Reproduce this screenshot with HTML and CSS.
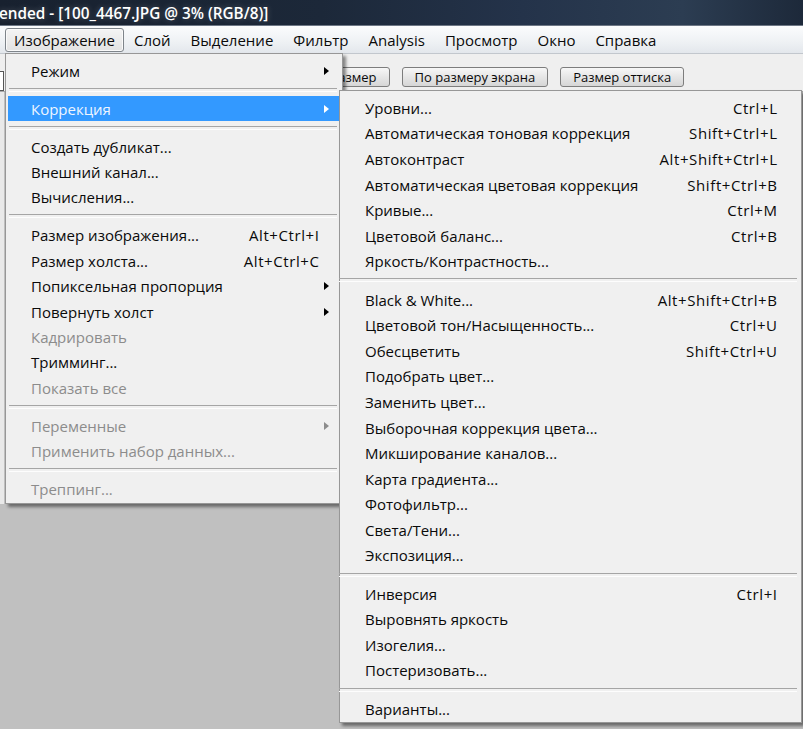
FILE: index.html
```html
<!DOCTYPE html>
<html lang="ru">
<head>
<meta charset="utf-8">
<title>Photoshop — Изображение</title>
<link rel="stylesheet" href="styles.css">
</head>
<body>
<div class="app">
  <div class="titlebar"><span class="title">ended - [100_4467.JPG @ 3% (RGB/8)]</span></div>
  <div class="menubar">
    <span class="mb-item active">Изображение</span>
    <span class="mb-item">Слой</span>
    <span class="mb-item">Выделение</span>
    <span class="mb-item">Фильтр</span>
    <span class="mb-item">Analysis</span>
    <span class="mb-item">Просмотр</span>
    <span class="mb-item">Окно</span>
    <span class="mb-item">Справка</span>
  </div>
  <div class="optionsbar">
    <span class="opt-field"></span>
    <span class="btn btn-first">Реальный размер</span>
    <span class="btn">По размеру экрана</span>
    <span class="btn">Размер оттиска</span>
  </div>
  <div class="workspace">
    <div class="tools"></div>
    <div class="canvas"></div>
  </div>

  <div class="menu menu-main">
    <div class="mi"><span class="lbl">Режим</span><span class="arr"><i class="tri"></i></span></div>
    <div class="sep"></div>
    <div class="mi hl"><span class="lbl">Коррекция</span><span class="arr"><i class="tri"></i></span></div>
    <div class="sep"></div>
    <div class="mi"><span class="lbl">Создать дубликат...</span><span class="arr"></span></div>
    <div class="mi"><span class="lbl">Внешний канал...</span><span class="arr"></span></div>
    <div class="mi"><span class="lbl">Вычисления...</span><span class="arr"></span></div>
    <div class="sep"></div>
    <div class="mi"><span class="lbl">Размер изображения...</span><span class="sc">Alt+Ctrl+I</span><span class="arr"></span></div>
    <div class="mi"><span class="lbl">Размер холста...</span><span class="sc">Alt+Ctrl+C</span><span class="arr"></span></div>
    <div class="mi"><span class="lbl">Попиксельная пропорция</span><span class="arr"><i class="tri"></i></span></div>
    <div class="mi"><span class="lbl">Повернуть холст</span><span class="arr"><i class="tri"></i></span></div>
    <div class="mi dis"><span class="lbl">Кадрировать</span><span class="arr"></span></div>
    <div class="mi"><span class="lbl">Тримминг...</span><span class="arr"></span></div>
    <div class="mi dis"><span class="lbl">Показать все</span><span class="arr"></span></div>
    <div class="sep"></div>
    <div class="mi dis"><span class="lbl">Переменные</span><span class="arr"><i class="tri"></i></span></div>
    <div class="mi dis"><span class="lbl">Применить набор данных...</span><span class="arr"></span></div>
    <div class="sep"></div>
    <div class="mi dis"><span class="lbl">Треппинг...</span><span class="arr"></span></div>
  </div>

  <div class="menu menu-sub">
    <div class="mi"><span class="lbl">Уровни...</span><span class="sc">Ctrl+L</span><span class="arr"></span></div>
    <div class="mi"><span class="lbl">Автоматическая тоновая коррекция</span><span class="sc">Shift+Ctrl+L</span><span class="arr"></span></div>
    <div class="mi"><span class="lbl">Автоконтраст</span><span class="sc">Alt+Shift+Ctrl+L</span><span class="arr"></span></div>
    <div class="mi"><span class="lbl">Автоматическая цветовая коррекция</span><span class="sc">Shift+Ctrl+B</span><span class="arr"></span></div>
    <div class="mi"><span class="lbl">Кривые...</span><span class="sc">Ctrl+M</span><span class="arr"></span></div>
    <div class="mi"><span class="lbl">Цветовой баланс...</span><span class="sc">Ctrl+B</span><span class="arr"></span></div>
    <div class="mi"><span class="lbl">Яркость/Контрастность...</span><span class="arr"></span></div>
    <div class="sep"></div>
    <div class="mi"><span class="lbl">Black &amp; White...</span><span class="sc">Alt+Shift+Ctrl+B</span><span class="arr"></span></div>
    <div class="mi"><span class="lbl">Цветовой тон/Насыщенность...</span><span class="sc">Ctrl+U</span><span class="arr"></span></div>
    <div class="mi"><span class="lbl">Обесцветить</span><span class="sc">Shift+Ctrl+U</span><span class="arr"></span></div>
    <div class="mi"><span class="lbl">Подобрать цвет...</span><span class="arr"></span></div>
    <div class="mi"><span class="lbl">Заменить цвет...</span><span class="arr"></span></div>
    <div class="mi"><span class="lbl">Выборочная коррекция цвета...</span><span class="arr"></span></div>
    <div class="mi"><span class="lbl">Микширование каналов...</span><span class="arr"></span></div>
    <div class="mi"><span class="lbl">Карта градиента...</span><span class="arr"></span></div>
    <div class="mi"><span class="lbl">Фотофильтр...</span><span class="arr"></span></div>
    <div class="mi"><span class="lbl">Света/Тени...</span><span class="arr"></span></div>
    <div class="mi"><span class="lbl">Экспозиция...</span><span class="arr"></span></div>
    <div class="sep"></div>
    <div class="mi"><span class="lbl">Инверсия</span><span class="sc">Ctrl+I</span><span class="arr"></span></div>
    <div class="mi"><span class="lbl">Выровнять яркость</span><span class="arr"></span></div>
    <div class="mi"><span class="lbl">Изогелия...</span><span class="arr"></span></div>
    <div class="mi"><span class="lbl">Постеризовать...</span><span class="arr"></span></div>
    <div class="sep"></div>
    <div class="mi"><span class="lbl">Варианты...</span><span class="arr"></span></div>
  </div>
</div>
</body>
</html>
```

FILE: styles.css
```css
* { box-sizing: border-box; }
html, body { margin: 0; padding: 0; }
body {
  width: 803px;
  height: 729px;
  overflow: hidden;
  background: #c0c0c0;
  font-family: "Open Sans", "Noto Sans", "DejaVu Sans", sans-serif;
  font-size: 15px;
  color: #0a0a0a;
}
.app {
  position: relative;
  width: 803px;
  height: 729px;
  display: flex;
  flex-direction: column;
  overflow: hidden;
}
.titlebar {
  height: 26px;
  flex: none;
  background: linear-gradient(to right, #18212f 0%, #1c2839 40%, #24334a 65%, #2c3d52 85%, #1d293a 100%);
  border-bottom: 1px solid #6d7785;
  display: flex;
  align-items: center;
  overflow: hidden;
}
.title {
  color: #fff;
  font-weight: 600;
  font-size: 15.3px;
  white-space: nowrap;
  margin-left: -1px;
  text-shadow: 0 0 6px rgba(255,255,255,0.25);
}
.menubar {
  height: 28px;
  flex: none;
  display: flex;
  align-items: center;
  padding-left: 5px;
  background: linear-gradient(#fbfcfd, #eef1f4 60%, #e3e7ec);
  border-bottom: 1px solid #c2c7cd;
}
.mb-item {
  height: 24px;
  line-height: 22px;
  padding: 0 9px 0 8px;
  border: 1px solid transparent;
  border-radius: 3px;
  white-space: nowrap;
}
.mb-item + .mb-item { margin-left: 1px; }
.mb-item.active {
  padding-right: 8px;
  border-color: #7e848a;
  background: linear-gradient(#f4f4f4, #e2e2e2);
  box-shadow: inset 0 0 0 1px #fafafa;
}
.optionsbar {
  height: 38px;
  flex: none;
  display: flex;
  align-items: center;
  background: #efefef;
  border-bottom: 1px solid #a9a9a9;
  gap: 12px;
}
.opt-field {
  width: 4px;
  height: 20px;
  margin-top: 16px;
  background: #fff;
  border: 1px solid #555;
  border-left: none;
}
.btn {
  height: 20px;
  line-height: 18px;
  margin-top: 8px;
  padding: 0 12px;
  border: 1px solid #7d7d7d;
  border-radius: 3px;
  background: linear-gradient(#f7f7f7, #e6e6e6 50%, #d6d6d6);
  font-size: 13px;
  white-space: nowrap;
}
.btn-first { margin-left: 234px; }
.workspace {
  flex: 1;
  display: flex;
  align-items: flex-start;
  background: #c0c0c0;
}
.tools {
  width: 4px;
  height: 412px;
  background: #e9e9e9;
}
.canvas { flex: 1; }

.menu {
  position: absolute;
  background: #f0f0f0;
  border: 1px solid #979797;
  box-shadow: 3px 3px 3px rgba(0,0,0,0.45);
  padding: 4px 2px 1px 2px;
}
.menu-main { left: 5px; top: 53px; width: 338px; --ih: 25.4px; }
.menu-sub { left: 339px; top: 90px; width: 463px; --ih: 25.6px; }
.mi {
  height: var(--ih);
  display: flex;
  align-items: center;
  padding-left: 23px;
  white-space: nowrap;
}
.mi .lbl { flex: 1; }
.mi .sc { text-align: right; letter-spacing: 0.6px; margin-right: -0.6px; }
.menu-main .arr { width: 21px; flex: none; display: flex; align-items: center; padding-left: 5px; }
.menu-sub .arr { width: 22px; flex: none; }
.tri {
  display: block;
  width: 0; height: 0;
  border-top: 4px solid transparent;
  border-bottom: 4px solid transparent;
  border-left: 5px solid #000;
}
.mi.hl {
  background: #3399ff;
  color: #eef5ff;
}
.mi.hl .tri { border-left-color: #fff; }
.mi.dis { color: #8c8c8c; }
.mi.dis .tri { border-left-color: #8c8c8c; }
.sep {
  height: 12.6px;
  display: flex;
  align-items: center;
}
.sep::before {
  content: "";
  display: block;
  width: 100%;
  height: 2px;
  border-top: 1px solid #a5a5a5;
  border-bottom: 1px solid #fdfdfd;
}
.menu-main .sep::before { margin: 0 3px 0 1px; }
.menu-sub .sep { margin-left: -3px; }
.menu-sub .sep::before { margin-right: 2px; }
```
